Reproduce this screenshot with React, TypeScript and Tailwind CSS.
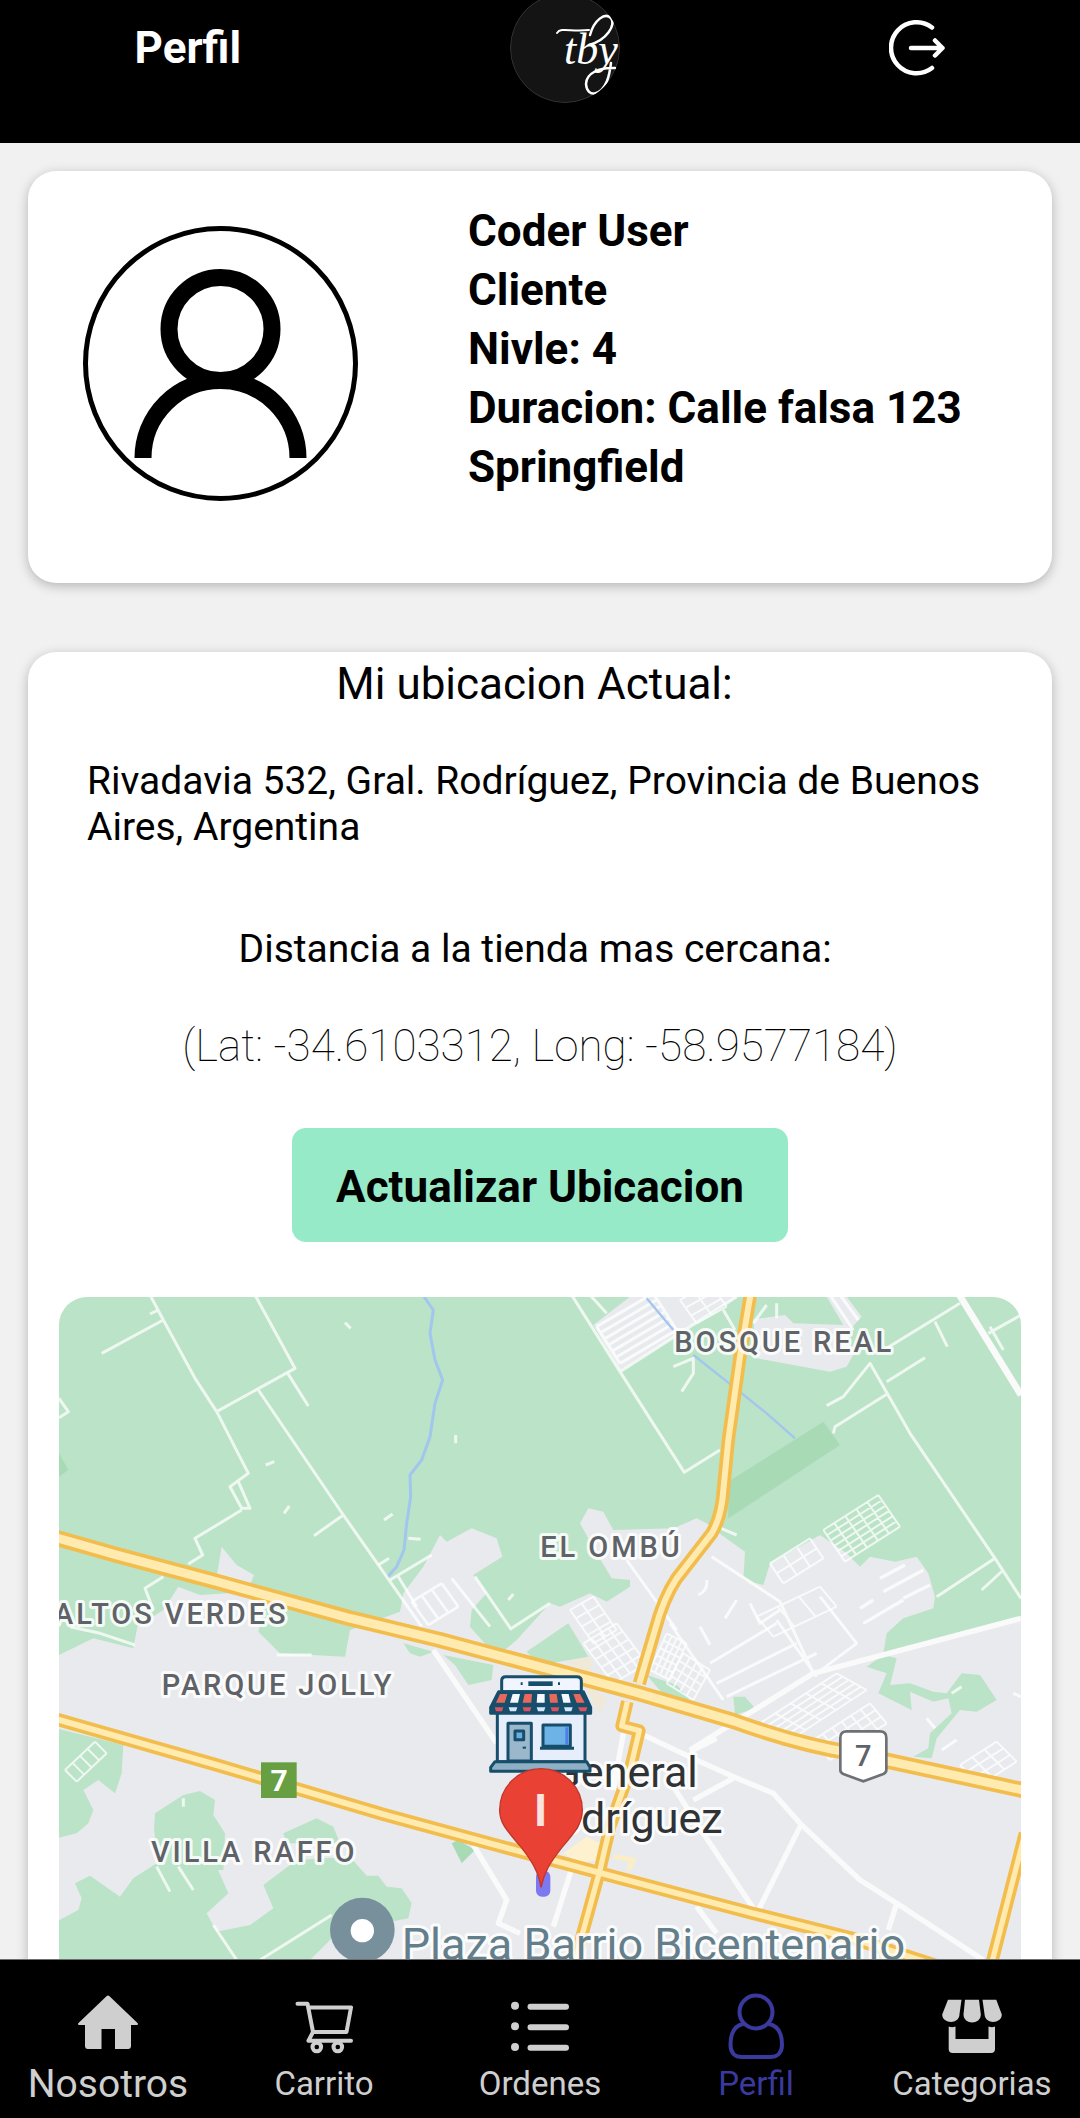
import React from "react";

/* ---------- header ---------- */

function BrandMark() {
  return (
    <svg viewBox="0 0 110 110" className="size-[110px] shrink-0 rounded-full" role="img" aria-label="tby">
      <circle cx="55" cy="55" r="55" fill="#141414" />
      <circle cx="55" cy="55" r="54.5" fill="none" stroke="#333" strokeWidth="1" />
      <g fill="none" stroke="#fff" strokeLinecap="round">
        <path d="M47 40C51 34 60 39 79 37" strokeWidth="2" />
        <path d="M80 42C84 27 95 19 101 25C106 32 97 47 79 52" strokeWidth="2.500" />
        <path d="M105 75C90 74 76 80 76 91C77 105 91 103 97 88C99 83 100 78 101 70" strokeWidth="2.500" />
      </g>
      <text x="54" y="71" fill="#fff" fontSize="44" fontStyle="italic" fontFamily="'Liberation Serif', serif">
        tby
      </text>
    </svg>
  );
}

function Header() {
  return (
    <header className="flex h-[143px] shrink-0 items-center justify-around overflow-hidden bg-black pb-12 text-white">
      <h1 className="text-[44px] leading-[52px] font-bold">Perfil</h1>
      <BrandMark />
      <button type="button" aria-label="Cerrar sesion">
        <svg viewBox="0 0 56 56" className="size-14" fill="none" stroke="#fff" strokeWidth="4.500" strokeLinecap="round" strokeLinejoin="round">
          <path d="M43 7.500A25.500 25.500 0 1 0 43 48" />
          <path d="M22 28H53M46 20.500L53.500 28L46 35.500" />
        </svg>
      </button>
    </header>
  );
}

/* ---------- profile card ---------- */

function Avatar() {
  return (
    <svg viewBox="0 0 275 275" className="m-[55px] mb-[82px] size-[275px] shrink-0" fill="none" stroke="#000" role="img" aria-label="Avatar">
      <circle cx="137.500" cy="137.500" r="135" strokeWidth="5" />
      <circle cx="137.500" cy="103" r="51.500" strokeWidth="17" />
      <path d="M60 232A77.500 77.500 0 0 1 215 232" strokeWidth="17" />
    </svg>
  );
}

function ProfileCard() {
  return (
    <section className="mx-7 mt-7 flex rounded-[28px] bg-white shadow-[0_3px_12px_rgba(0,0,0,0.25)]">
      <Avatar />
      <div className="ml-[55px] pt-[31px] pr-14 text-[44px] leading-[59px] font-bold">
        <p>Coder User</p>
        <p>Cliente</p>
        <p>Nivle: 4</p>
        <p>Duracion: Calle falsa 123 Springfield</p>
      </div>
    </section>
  );
}

/* ---------- map ---------- */

type GridProps = { x: number; y: number; u: [number, number]; v: [number, number]; n: number; m: number; w?: number };

/* A block of parallel streets: u and v are the two sides of the block. */
function Streets({ x, y, u, v, n, m, w = 6 }: GridProps) {
  let d = "";
  for (let i = 0; i <= n; i++) {
    const t = i / n;
    d += `M${x + v[0] * t} ${y + v[1] * t}l${u[0]} ${u[1]}`;
  }
  for (let i = 0; i <= m; i++) {
    const t = i / m;
    d += `M${x + u[0] * t} ${y + u[1] * t}l${v[0]} ${v[1]}`;
  }
  return <path d={d} strokeWidth={w} />;
}

const HIGHWAYS = [
  { d: "M0 738L200 795L500 875L900 985L1170 1050L1500 1138L1760 1208L2050 1293Q2250 1365 2400 1388L2940 1505", w: 48 },
  { d: "M0 1282L500 1425L1000 1573L1300 1655L1700 1762L2100 1868L2400 1943L2700 2040", w: 40 },
  { d: "M2102 10L2070 200L2035 450L2020 600Q2015 680 1985 730L1880 865Q1840 925 1815 1020L1768 1180", w: 40 },
  { d: "M1732 1235L1715 1308L1768 1322L1740 1440L1680 1610L1650 1740L1595 1940L1560 2080", w: 38 },
  { d: "M2925 1630L2820 2040", w: 38 },
];

function Town({ x, y, children }: { x: number; y: number; children: string }) {
  return (
    <text x={x} y={y} fontSize="87" fontWeight="500" fill="#5f6368" className="tracking-widest">
      {children}
    </text>
  );
}

function Store() {
  return (
    <g stroke="#174e6b" strokeWidth="9" strokeLinejoin="round">
      <rect x="112" y="185" width="263" height="150" fill="#e6edfb" />
      <path d="M125 125V92Q125 80 137 80H350Q364 80 364 92V125Z" fill="#f0f5ff" />
      <path d="M205 101H278" strokeWidth="14" />
      <path d="M182 101H188M294 101H300" strokeWidth="8" />
      <path d="M116 125H370L392 172V190H92V172Z" fill="#174e6b" />
      <g stroke="none">
        <path d="M120 132H142L134 158H108ZM194 132H216L214 158H188ZM268 132H290L294 158H270ZM340 132H360L374 158H350Z" fill="#e8695c" />
        <path d="M158 132H180L174 158H150ZM232 132H254V158H230ZM304 132H326L332 158H310Z" fill="#f4f8ff" />
        <path d="M104 172H130L126 184H108ZM188 172H214L210 184H192ZM272 172H298L294 184H276ZM354 172H382L378 184H360Z" fill="#e05260" />
        <path d="M146 172H172L168 184H150ZM230 172H256L252 184H234ZM312 172H338L334 184H316Z" fill="#d4e8f8" />
      </g>
      <rect x="144" y="220" width="70" height="113" fill="#9bb7cc" />
      <rect x="165" y="243" width="26" height="26" fill="#69aee0" />
      <path d="M188 293H198" strokeWidth="6" />
      <rect x="249" y="225" width="82" height="64" fill="#6db3e6" />
      <path d="M320 232V284" stroke="#4f7cf0" strokeWidth="8" />
      <path d="M240 295H342" />
      <path d="M105 335H380L390 352V364H92V352Z" fill="#8fb0c4" />
    </g>
  );
}

function LocationMap() {
  return (
    <svg
      viewBox="27 21 2886 2100"
      preserveAspectRatio="xMidYMin slice"
      className="mx-auto block w-full rounded-[28px]"
      role="img"
      aria-label="Mapa de General Rodríguez"
      fontFamily="Roboto, sans-serif"
    >
      <rect x="0" y="0" width="2940" height="2140" fill="#bbe3c7" />

      {/* built-up land */}
      <g fill="#e8eaed">
        <path d="M27 1095L130 1045L250 1075L262 1010L340 960L385 890L450 915L600 905L640 950L625 1025L690 1090L885 1100L900 1020L1050 965L1060 910L1120 830L1170 735L1190 755L1265 715L1340 745L1357 800L1270 855L1310 910L1265 960L1260 1010L1340 1100L1400 1050L1500 940L1530 950L1620 910L1670 935L1740 890L1740 870L1685 865L1640 790L1590 700L1615 655L1660 665L1690 720L1870 715L1940 685L1970 700L2015 735L2085 785L2080 870L2140 885L2160 820L2310 735L2390 790L2430 830L2460 800L2535 815L2600 800L2635 850L2655 920L2650 955L2560 985L2510 1030L2500 1090L2940 985V2140H0V1095Z" />
        <path d="M515 770L560 825L612 855L600 885L500 860Z" />
        <path d="M1630 105L1740 20H2060L1710 242Z" />
        <path d="M2110 88L2205 75L2230 100L2380 105L2330 20H2390L2435 80L2390 130L2412 190L2390 230L2340 245L2120 205Z" />
      </g>
      <g fill="#a8dab5">
        <path d="M2035 575L2320 395L2370 465L2035 685Z" />
        <path d="M27 490L55 540L27 560Z" />
      </g>

      {/* parks */}
      <g fill="#bbe3c7">
        <path d="M0 1310L220 1365L215 1450L195 1510L145 1470L100 1500L130 1560L115 1600L80 1630L0 1650Z" />
        <path d="M315 1570L400 1515L450 1503L495 1530L490 1575L525 1630L520 1740H330L312 1620Z" />
        <path d="M0 1905L85 1860L95 1825L75 1780L120 1757L210 1820L250 1765L320 1720L500 1730L535 1810L470 1870L500 1925L600 1905L670 1855L640 1785L740 1710L900 1700L950 1757L985 1757L1010 1790L1055 1795L1085 1840L1075 1885L1000 1900L850 1940L780 2010V2140H0Z" />
        <path d="M700 1630L800 1585L850 1610L870 1660H710Z" />
        <path d="M1180 1095L1330 1125L1325 1170L1255 1185L1215 1125Z" />
        <path d="M1060 1060L1150 1085L1110 1100L1080 1090Z" />
        <path d="M1430 1085L1555 1000L1615 1100L1470 1125Z" />
        <path d="M1790 1155L1880 1185L1920 1230L1850 1225Z" />
        <path d="M2050 1220H2085L2115 1255L2055 1275Z" />
        <path d="M2450 1130L2500 1095L2540 1105L2520 1185L2580 1180L2650 1205L2690 1210L2735 1150L2790 1155L2840 1230L2780 1265L2730 1260L2660 1345L2645 1405L2590 1400L2635 1375L2640 1330L2705 1270L2695 1225L2650 1235L2580 1205L2585 1260L2485 1210L2510 1150Z" />
      </g>
      <path d="M1205 1660L1225 1650L1275 1680L1235 1720Z" fill="#a8dab5" />
      <path d="M1550 1115L1620 1100L1630 1160ZM1600 1180L1675 1230L1645 1265Z" fill="#f1e9d8" />
      <path d="M1540 1690L1610 1640L1650 1660L1640 1710L1590 1720Z" fill="#fdf1cf" />

      {/* streams */}
      <g fill="none" stroke="#a2c6ee" strokeWidth="9" strokeLinejoin="round">
        <path d="M1115 10L1150 60L1140 130L1155 210L1178 270L1155 340L1140 440L1115 510L1080 555L1082 620L1070 700L1062 780L1040 830L1012 862" />
        <path d="M1930 195L2050 290L2150 370L2235 445" strokeWidth="7" />
      </g>

      {/* minor streets */}
      <g fill="none" stroke="#fff" strokeOpacity="0.75" strokeWidth="9" strokeLinejoin="round">
        <path d="M300 15L340 90L435 265L500 365L595 550L540 590L575 655L600 655L565 575M340 90L155 190M300 72L325 60M500 365L735 235L615 15M710 245L775 348M625 300L880 675L1115 1010M880 675L792 737M575 660L435 745L458 795L415 822M340 860L285 895L310 960M27 325L55 365L27 383" />
        <path d="M885 98L902 115M647 525L673 515M718 648L702 670M1002 690L1028 672M1217 435V460M1075 745L1112 748M985 825L1017 805M1375 930L1390 912" />
        <path d="M1020 870L1145 795M1045 860L1100 950M1275 860L1385 1020M1205 865L1320 1010M1385 1015L1500 940" />
        <path d="M1565 15L1710 245L1903 547L2010 480M1710 245L2060 20M1620 15L1670 70M2020 60L2055 120M1870 230L1930 205L1930 250L1895 305" />
        <path d="M2110 100L2150 45M2180 40V85M2340 15L2410 120M2370 15L2425 90M2510 175L2730 40M2330 347L2380 320L2460 220L2580 430L2835 805L2913 925M2350 430L2355 410L2515 310M2510 275L2625 203M2655 95L2692 170M2835 805L2660 920M2795 900L2860 840M2815 130L2913 75M2820 110L2860 180M2013 715L2060 735" />
        <path d="M2490 865L2565 825M2500 905L2620 840M2430 955L2470 930M2440 1000L2560 930M2560 925L2640 885" strokeWidth="10" />
        <path d="M1730 810L1880 1020M1945 915Q1975 900 1970 870M2025 985L2060 930M2100 940L2130 1000L2190 960" />
        <path d="M60 1010L150 1030L255 1065M680 1095H785M320 1730L360 1805M385 1730L430 1800M490 1905L560 2010M630 2010L845 1875M400 1525V1550" />
        <path d="M1980 1120L2180 1000M2000 1180L2240 1060M2030 1220L2300 1090M2180 990L2300 1160M2310 920L2420 1060L2300 1150M1860 1000L2020 1230M1950 1010L1980 1065" />
        <path d="M2705 1210L2735 1190M2630 1285L2655 1315M2675 1380L2720 1350M2890 1210L2913 1220" />
        <Streets x={1640} y={110} u={[170, -100]} v={[70, 110]} n={6} m={1} w={9} />
        <Streets x={1890} y={30} u={[90, -50]} v={[50, 70]} n={3} m={2} />
        <Streets x={2320} y={720} u={[165, -105]} v={[65, 95]} n={6} m={5} />
        <Streets x={1085} y={935} u={[90, -55]} v={[50, 70]} n={1} m={3} w={8} />
        <Streets x={1560} y={960} u={[70, -40]} v={[70, 100]} n={4} m={2} />
        <Streets x={1600} y={1060} u={[100, -60]} v={[90, 120]} n={5} m={4} />
        <Streets x={1850} y={1030} u={[60, 30]} v={[-50, 110]} n={5} m={4} />
        <Streets x={1900} y={1090} u={[80, 50]} v={[-50, 90]} n={4} m={4} />
        <Streets x={2130} y={1300} u={[230, -150]} v={[90, 50]} n={5} m={5} />
        <Streets x={2290} y={1350} u={[170, -110]} v={[50, 60]} n={3} m={6} />
        <Streets x={2160} y={820} u={[40, 60]} v={[120, -75]} n={3} m={2} />
        <Streets x={2120} y={980} u={[190, -90]} v={[50, 60]} n={1} m={3} />
        <Streets x={45} y={1440} u={[90, -85]} v={[35, 35]} n={1} m={4} />
        <Streets x={2730} y={1425} u={[110, -70]} v={[60, 60]} n={3} m={3} />
      </g>
      <path d="M1790 25L1870 120" fill="none" stroke="#a2c6ee" strokeWidth="7" />

      {/* avenues */}
      <g fill="none" stroke="#fafafa" strokeWidth="16" strokeLinejoin="round">
        <path d="M2728 15L2913 315" strokeWidth="20" />
        <path d="M2913 985L2290 1150L1920 1380M2000 1345L1920 1385" />
        <path d="M1985 800L2190 935L2290 1150" strokeWidth="9" />
        <path d="M1770 1330L1950 1415L2050 1460L2170 1510L2250 1600L2430 1770L2540 1840L2800 2010" />
        <path d="M1870 1490L1960 1630L2120 1870L2255 1600M1930 1530L2050 1465M2540 1840L2515 1920M1940 1850L2000 1930" />
        <path d="M1150 1080L1340 1360M1270 1665L1370 1830L1345 1900L1410 1930M1720 1330L1690 1500M1570 1720L1510 1910" />
      </g>
      <path d="M1690 1700L1750 1710L1735 1740" fill="none" stroke="#fbeec5" strokeWidth="14" />

      {/* highways */}
      <g fill="none" stroke="#f2bd4d" strokeLinejoin="round">
        {HIGHWAYS.map((h) => (
          <path key={h.d} d={h.d} strokeWidth={h.w} />
        ))}
      </g>
      <g fill="none" stroke="#ffeab0" strokeLinejoin="round">
        {HIGHWAYS.map((h) => (
          <path key={h.d} d={h.d} strokeWidth={h.w - 22} />
        ))}
      </g>

      {/* labels */}
      <g stroke="#fff" strokeOpacity="0.85" strokeWidth="18" strokeLinejoin="round" style={{ paintOrder: "stroke" }}>
        <Town x={1873} y={185}>BOSQUE REAL</Town>
        <Town x={1471} y={801}>EL OMBÚ</Town>
        <Town x={12} y={1003}>ALTOS VERDES</Town>
        <Town x={335} y={1215}>PARQUE JOLLY</Town>
        <Town x={303} y={1715}>VILLA RAFFO</Town>
        <g textAnchor="middle" fontSize="129" fill="#303336">
          <text x="1724" y="1490">General</text>
          <text x="1729" y="1628">Rodríguez</text>
        </g>
        <text x="1055" y="2010" fontSize="135" fill="#647f8c">Plaza Barrio Bicentenario</text>
      </g>
      <circle cx="937" cy="1920" r="97" fill="#78909c" />
      <circle cx="937" cy="1922" r="35" fill="#fff" />

      <rect x="633" y="1417" width="107" height="107" fill="#689f43" />
      <text x="687" y="1502" textAnchor="middle" fontSize="90" fontWeight="700" fill="#fff">7</text>
      <path d="M2390 1324H2490Q2509 1324 2509 1343V1440Q2509 1448 2500 1452L2440 1474L2380 1452Q2371 1448 2371 1440V1343Q2371 1324 2390 1324Z" fill="#fff" stroke="#6d7175" strokeWidth="8" />
      <text x="2440" y="1428" textAnchor="middle" fontSize="87" fontWeight="500" fill="#5f6368">7</text>

      {/* shop and current position */}
      <g transform="translate(1230 1080)">
        <Store />
        <rect x="228" y="662" width="43" height="78" rx="18" fill="#7b78f0" />
        <path d="M243 712C236 665 215 632 182 590C140 540 119 520 119 480A124 124 0 0 1 367 480C367 520 346 545 306 592C268 640 252 668 243 712Z" fill="#e94235" stroke="#c3352b" strokeWidth="4" />
        <text x="242" y="529" textAnchor="middle" fontSize="135" fontWeight="700" fill="#fde3e0">I</text>
      </g>
    </svg>
  );
}

function LocationCard() {
  return (
    <section className="mx-7 mt-[69px] flex flex-col items-center rounded-[28px] bg-white px-[31px] pt-1.5 pb-7 shadow-[0_3px_12px_rgba(0,0,0,0.25)]">
      <h2 className="text-[44px] leading-[52px] whitespace-pre">{"Mi ubicacion Actual: "}</h2>
      <p className="mt-12 self-stretch px-7 text-[39px] leading-[46px]">
        Rivadavia 532, Gral. Rodríguez, Provincia de Buenos Aires, Argentina
      </p>
      <p className="mt-[76px] text-[39px] leading-[46px] whitespace-pre">{"Distancia a la tienda mas cercana: "}</p>
      <p className="mt-12 text-[44px] leading-[52px] font-thin">(Lat: -34.6103312, Long: -58.9577184)</p>
      <button type="button" className="mt-14 mb-[55px] rounded-[14px] bg-[#96eac8] px-11 pt-[33px] pb-[29px] text-[44px] leading-[52px] font-bold">
        Actualizar Ubicacion
      </button>
      <LocationMap />
    </section>
  );
}

/* ---------- tab bar ---------- */

const line = { fill: "none", stroke: "currentColor", strokeLinecap: "round", strokeLinejoin: "round" } as const;

const HomeIcon = (
  <path fill="currentColor" d="M31.500 3.200Q33 1.800 34.500 3.200L62.500 30Q64 32 61.500 32H56V53Q56 56 53 56H40V36H26.500V56H13Q10 56 10 53V32H4.500Q2 32 3.500 30Z" />
);
const CartIcon = (
  <g {...line} strokeWidth="4">
    <path d="M6.500 10.700H16.500L22 39H55.500L60 14.500H18M22 39L17.500 47.700H60" />
    <circle cx="25.800" cy="54" r="4.300" />
    <circle cx="46.800" cy="54" r="4.300" />
  </g>
);
const ListIcon = (
  <g {...line} strokeWidth="6">
    <path d="M23.500 13.700H59M23.500 34.300H59M23.500 54.700H59" />
    <path d="M8 12.700H8.010M8 33.300H8.010M8 54H8.010" strokeWidth="8" />
  </g>
);
const UserIcon = (
  <g {...line} strokeWidth="4">
    <circle cx="33" cy="19" r="16.500" />
    <path d="M20 31C10 33 7.500 42 7.500 52C7.500 60 12 64 19 64H47C54 64 59 60 59 52C59 42 56 33 46 31" />
  </g>
);
const ShopIcon = (
  <g fill="currentColor">
    <path d="M9 6.700H22.500L20.500 21C20.500 32 3.200 31 3.200 21.500Z" />
    <path d="M26 6.700H40L41.800 21.500C41.800 32 24.500 32 24.500 21.500Z" />
    <path d="M43.500 6.700H57.300L62.800 21.500C62.800 31 46 32 45.500 21Z" />
    <path d="M9.700 33.500Q13 35 16.500 33.500V46H49.500V33.500Q53 35 56 33.500V56Q56 60 52 60H13.700Q9.700 60 9.700 56Z" />
  </g>
);

const TABS = [
  { label: "Nosotros", icon: HomeIcon, tone: "text-[#cfcfcf]", size: "text-[39px]" },
  { label: "Carrito", icon: CartIcon, tone: "text-[#cfcfcf]", size: "text-[33px]" },
  { label: "Ordenes", icon: ListIcon, tone: "text-[#cfcfcf]", size: "text-[33px]" },
  { label: "Perfil", icon: UserIcon, tone: "text-[#3a3a9e]", size: "text-[33px]" },
  { label: "Categorias", icon: ShopIcon, tone: "text-[#cfcfcf]", size: "text-[33px]" },
];

function TabBar() {
  return (
    <nav className="grid h-[159px] shrink-0 grid-cols-5 border-t border-[#6b6f6d] bg-black pt-[33px]">
      {TABS.map((tab) => (
        <a key={tab.label} href={"#" + tab.label.toLowerCase()} className={`flex flex-col items-center ${tab.tone}`}>
          <svg viewBox="0 0 66 66" className="size-[66px]" aria-hidden="true">
            {tab.icon}
          </svg>
          <span className={`mt-[3px] leading-[44px] ${tab.size}`}>{tab.label}</span>
        </a>
      ))}
    </nav>
  );
}

export default function App() {
  return (
    <div className="flex h-screen flex-col overflow-hidden bg-[#f1f1f1] font-[Roboto,sans-serif] text-black">
      <Header />
      <main className="min-h-0 flex-1 overflow-y-auto [scrollbar-width:none]">
        <ProfileCard />
        <LocationCard />
      </main>
      <TabBar />
    </div>
  );
}
